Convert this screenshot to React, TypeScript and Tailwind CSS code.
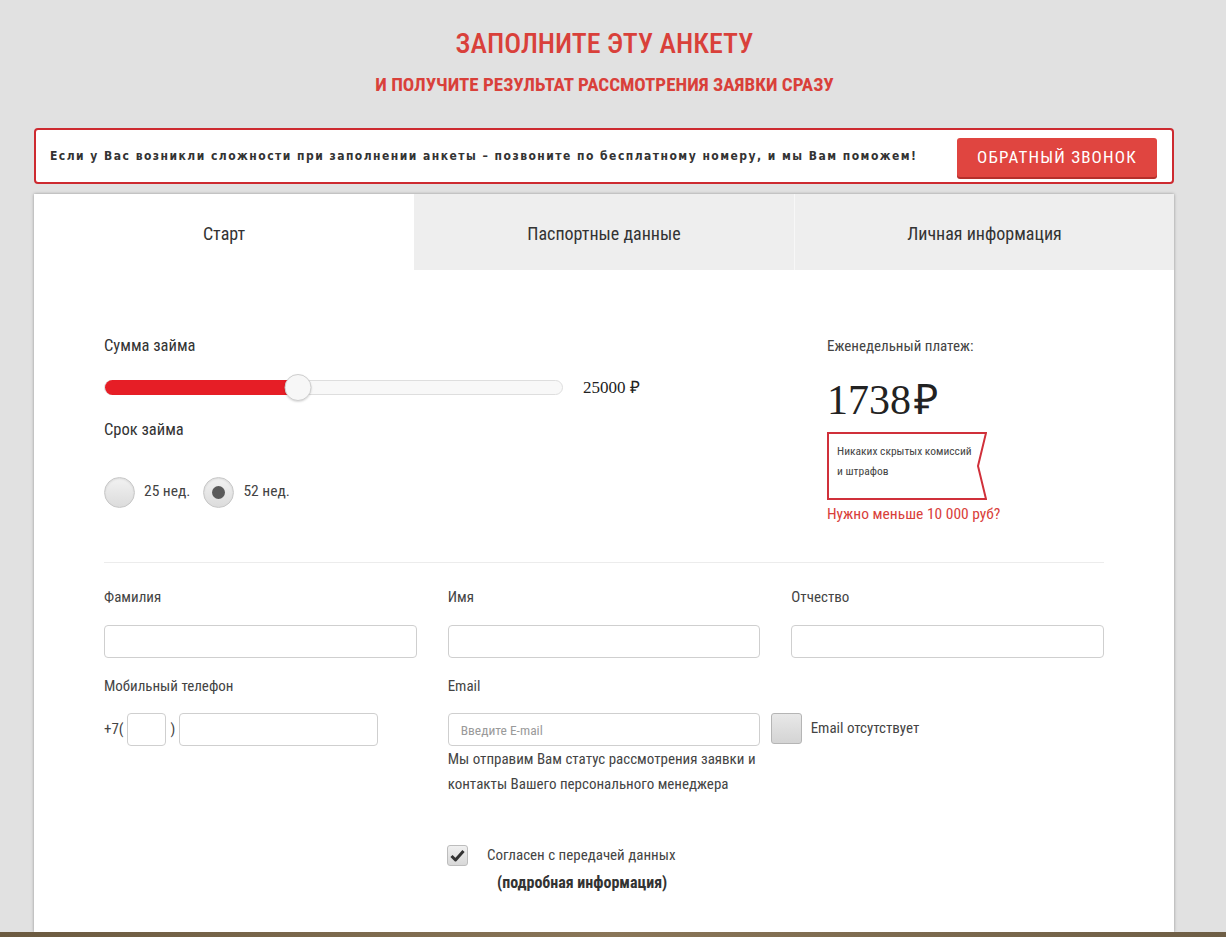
import React, { useState } from 'react';

const Field: React.FC<{ label: string }> = ({ label }) => (
  <div className="flex flex-col">
    <label className="h-5 text-[15px] leading-5 text-[#444]">{label}</label>
    <input className="mt-[18px] h-[33px] w-full rounded-[4px] border border-[#cfcfcf] bg-white px-3 outline-none" />
  </div>
);

const Ribbon: React.FC = () => (
  <div className="relative mt-[8px] h-[68px] w-[160px]">
    <svg className="absolute inset-0" width="160" height="68" viewBox="0 0 160 68">
      <path d="M1 1 H159 L151 34 L159 67 H1 Z" fill="#fff" stroke="#d0303a" strokeWidth="2" />
    </svg>
    <div className="relative whitespace-nowrap px-[10px] pt-[9px] text-[11.5px] leading-[20px] text-[#444]">
      Никаких скрытых комиссий
      <br />и штрафов
    </div>
  </div>
);

export default function App() {
  const [term, setTerm] = useState<25 | 52>(52);
  const [agree, setAgree] = useState(true);
  const [noEmail, setNoEmail] = useState(false);
  const amount = 25000;
  const pct = 42.3;

  return (
    <div className="min-h-screen bg-[#e1e1e1] font-['Roboto',sans-serif] font-stretch-[75%] text-[#333]">
      <div className="w-[1209px]">
        {/* header */}
        <div className="pt-[26px] text-center text-[#d9403a]">
          <h1 className="text-[28px] leading-[36px] font-medium">ЗАПОЛНИТЕ ЭТУ АНКЕТУ</h1>
          <h2 className="mt-[10px] text-[19px] leading-[26px] font-bold">
            И ПОЛУЧИТЕ РЕЗУЛЬТАТ РАССМОТРЕНИЯ ЗАЯВКИ СРАЗУ
          </h2>
        </div>

        <div className="ml-[34px] mt-[30px] w-[1140px]">
          {/* notice */}
          <div className="flex h-[56px] items-center justify-between rounded-[4px] border-2 border-[#cd2a30] bg-white pl-[14px] pr-[15px]">
            <p className="font-['DejaVu_Sans_Condensed',sans-serif] font-stretch-normal text-[12px] font-bold tracking-[1.47px] text-[#333]">
              Если у Вас возникли сложности при заполнении анкеты – позвоните по бесплатному номеру, и мы Вам поможем!
            </p>
            <button className="mt-[3px] h-[39px] w-[200px] rounded-[3px] bg-[#e04540] text-[17px] tracking-[1.2px] text-white shadow-[0_2px_0_#b52f2b]">
              ОБРАТНЫЙ ЗВОНОК
            </button>
          </div>

          {/* card */}
          <div className="mt-[10px] bg-white pb-[37px] shadow-[0_0_3px_rgba(0,0,0,0.35)]">
            <div className="grid h-[76px] grid-cols-3 text-[18px] text-[#333]">
              <div className="flex items-center justify-center bg-white pt-[2px]">Старт</div>
              <div className="flex items-center justify-center bg-[#eeeeee] pt-[2px]">Паспортные данные</div>
              <div className="flex items-center justify-center border-l border-[#f7f7f7] bg-[#eeeeee] pt-[2px]">Личная информация</div>
            </div>

            <div className="px-[70px] pt-[66px]">
              <div className="flex">
                {/* left: slider & term */}
                <div className="w-[723px]">
                  <div className="text-[16.5px] leading-5">Сумма займа</div>
                  <div className="mt-[19px] flex items-center">
                    <div className="relative h-[15px] w-[459px] rounded-full border border-[#dedede] bg-[#f8f8f8]">
                      <div className="absolute left-0 top-[-1px] h-[15px] rounded-l-full bg-[#e61e26]" style={{ width: `${pct}%` }} />
                      <div
                        className="absolute top-[-7px] h-[27px] w-[27px] -translate-x-1/2 rounded-full border border-[#cfcfcf] bg-[#f7f7f7] shadow-[0_1px_2px_rgba(0,0,0,0.15)]"
                        style={{ left: `${pct}%` }}
                      />
                    </div>
                    <span className="ml-[20px] font-['Liberation_Serif',serif] font-stretch-normal text-[17px] text-[#222]">{amount} ₽</span>
                  </div>
                  <div className="mt-[19px] text-[16.5px] leading-5">Срок займа</div>
                  <div className="mt-[37px] flex items-center text-[15.5px] text-[#444]">
                    {([25, 52] as const).map((w) => (
                      <button key={w} onClick={() => setTerm(w)} className="mr-[13px] flex items-center">
                        <span className="flex h-[31px] w-[31px] items-center justify-center rounded-full border border-[#c8c8c8] bg-gradient-to-b from-[#f2f2f2] to-[#dcdcdc] shadow-[inset_0_1px_2px_rgba(0,0,0,0.1)]">
                          {term === w && <span className="h-[13px] w-[13px] rounded-full bg-[#5a5a5a]" />}
                        </span>
                        <span className="ml-[9px]">{w} нед.</span>
                      </button>
                    ))}
                  </div>
                </div>

                {/* right: payment */}
                <div className="flex flex-col">
                  <div className="text-[15px] leading-5 text-[#444]">Еженедельный платеж:</div>
                  <div className="mt-[20px] font-['Liberation_Serif',serif] font-stretch-normal text-[42px] leading-[48px] text-[#222]">
                    1738<span className="ml-[3px]">₽</span>
                  </div>
                  <Ribbon />
                  <a className="mt-[4px] text-[15.5px] leading-5 text-[#d9403a]" href="#">Нужно меньше 10 000 руб?</a>
                </div>
              </div>

              <div className="mt-[38px] h-px bg-[#ececec]" />

              {/* personal fields */}
              <div className="mt-[24px] grid grid-cols-3 gap-x-[31px]">
                <Field label="Фамилия" />
                <Field label="Имя" />
                <Field label="Отчество" />
              </div>

              <div className="mt-[18px] grid grid-cols-3 gap-x-[31px]">
                <div>
                  <label className="block h-5 text-[15px] leading-5 text-[#444]">Мобильный телефон</label>
                  <div className="mt-[17px] flex items-center text-[15px] text-[#444]">
                    <span>+7(</span>
                    <input className="ml-[3px] h-[33px] w-[39px] rounded-[4px] border border-[#cfcfcf] outline-none" />
                    <span className="ml-[5px]">)</span>
                    <input className="ml-[4px] h-[33px] w-[199px] rounded-[4px] border border-[#cfcfcf] outline-none" />
                  </div>
                </div>
                <div className="col-span-2">
                  <label className="block h-5 text-[15px] leading-5 text-[#444]">Email</label>
                  <div className="mt-[17px] flex items-start">
                    <div className="w-[312px]">
                      <input
                        placeholder="Введите E-mail"
                        className="h-[33px] w-full rounded-[4px] border border-[#cfcfcf] px-[12px] text-[13.5px] outline-none placeholder:text-[#9a9a9a]"
                      />
                      <p className="mt-[1px] text-[15px] leading-[25px] text-[#444]">
                        Мы отправим Вам статус рассмотрения заявки и контакты Вашего персонального менеджера
                      </p>
                    </div>
                    <button onClick={() => setNoEmail(!noEmail)} className="ml-[11px] flex items-center">
                      <span className="flex h-[31px] w-[31px] items-center justify-center rounded-[3px] border border-[#b5b5b5] bg-gradient-to-b from-[#e8e8e8] to-[#d4d4d4]">
                        {noEmail && <span className="text-[18px] text-[#333]">✔</span>}
                      </span>
                      <span className="ml-[9px] text-[15px] text-[#444]">Email отсутствует</span>
                    </button>
                  </div>
                </div>
              </div>

              {/* agreement */}
              <div className="ml-[343px] mt-[47px]">
                <button onClick={() => setAgree(!agree)} className="flex items-center">
                  <span className="flex h-[21px] w-[21px] items-center justify-center rounded-[3px] border border-[#bdbdbd] bg-gradient-to-b from-[#f0f0f0] to-[#d8d8d8]">
                    {agree && (
                      <svg width="15" height="13" viewBox="0 0 15 13">
                        <path d="M1.5 7 L5.5 11 L13.5 2" fill="none" stroke="#333" strokeWidth="3" strokeLinejoin="round" />
                      </svg>
                    )}
                  </span>
                  <span className="ml-[19px] text-[15px] text-[#444]">Согласен с передачей данных</span>
                </button>
                <div className="ml-[50px] mt-[4px] text-[16px] font-bold text-[#333]">(подробная информация)</div>
              </div>
            </div>
          </div>
        </div>
      </div>
      <div className="h-[40px] bg-gradient-to-r from-[#6b5a40] via-[#8a7658] to-[#6e5e45]" />
    </div>
  );
}
